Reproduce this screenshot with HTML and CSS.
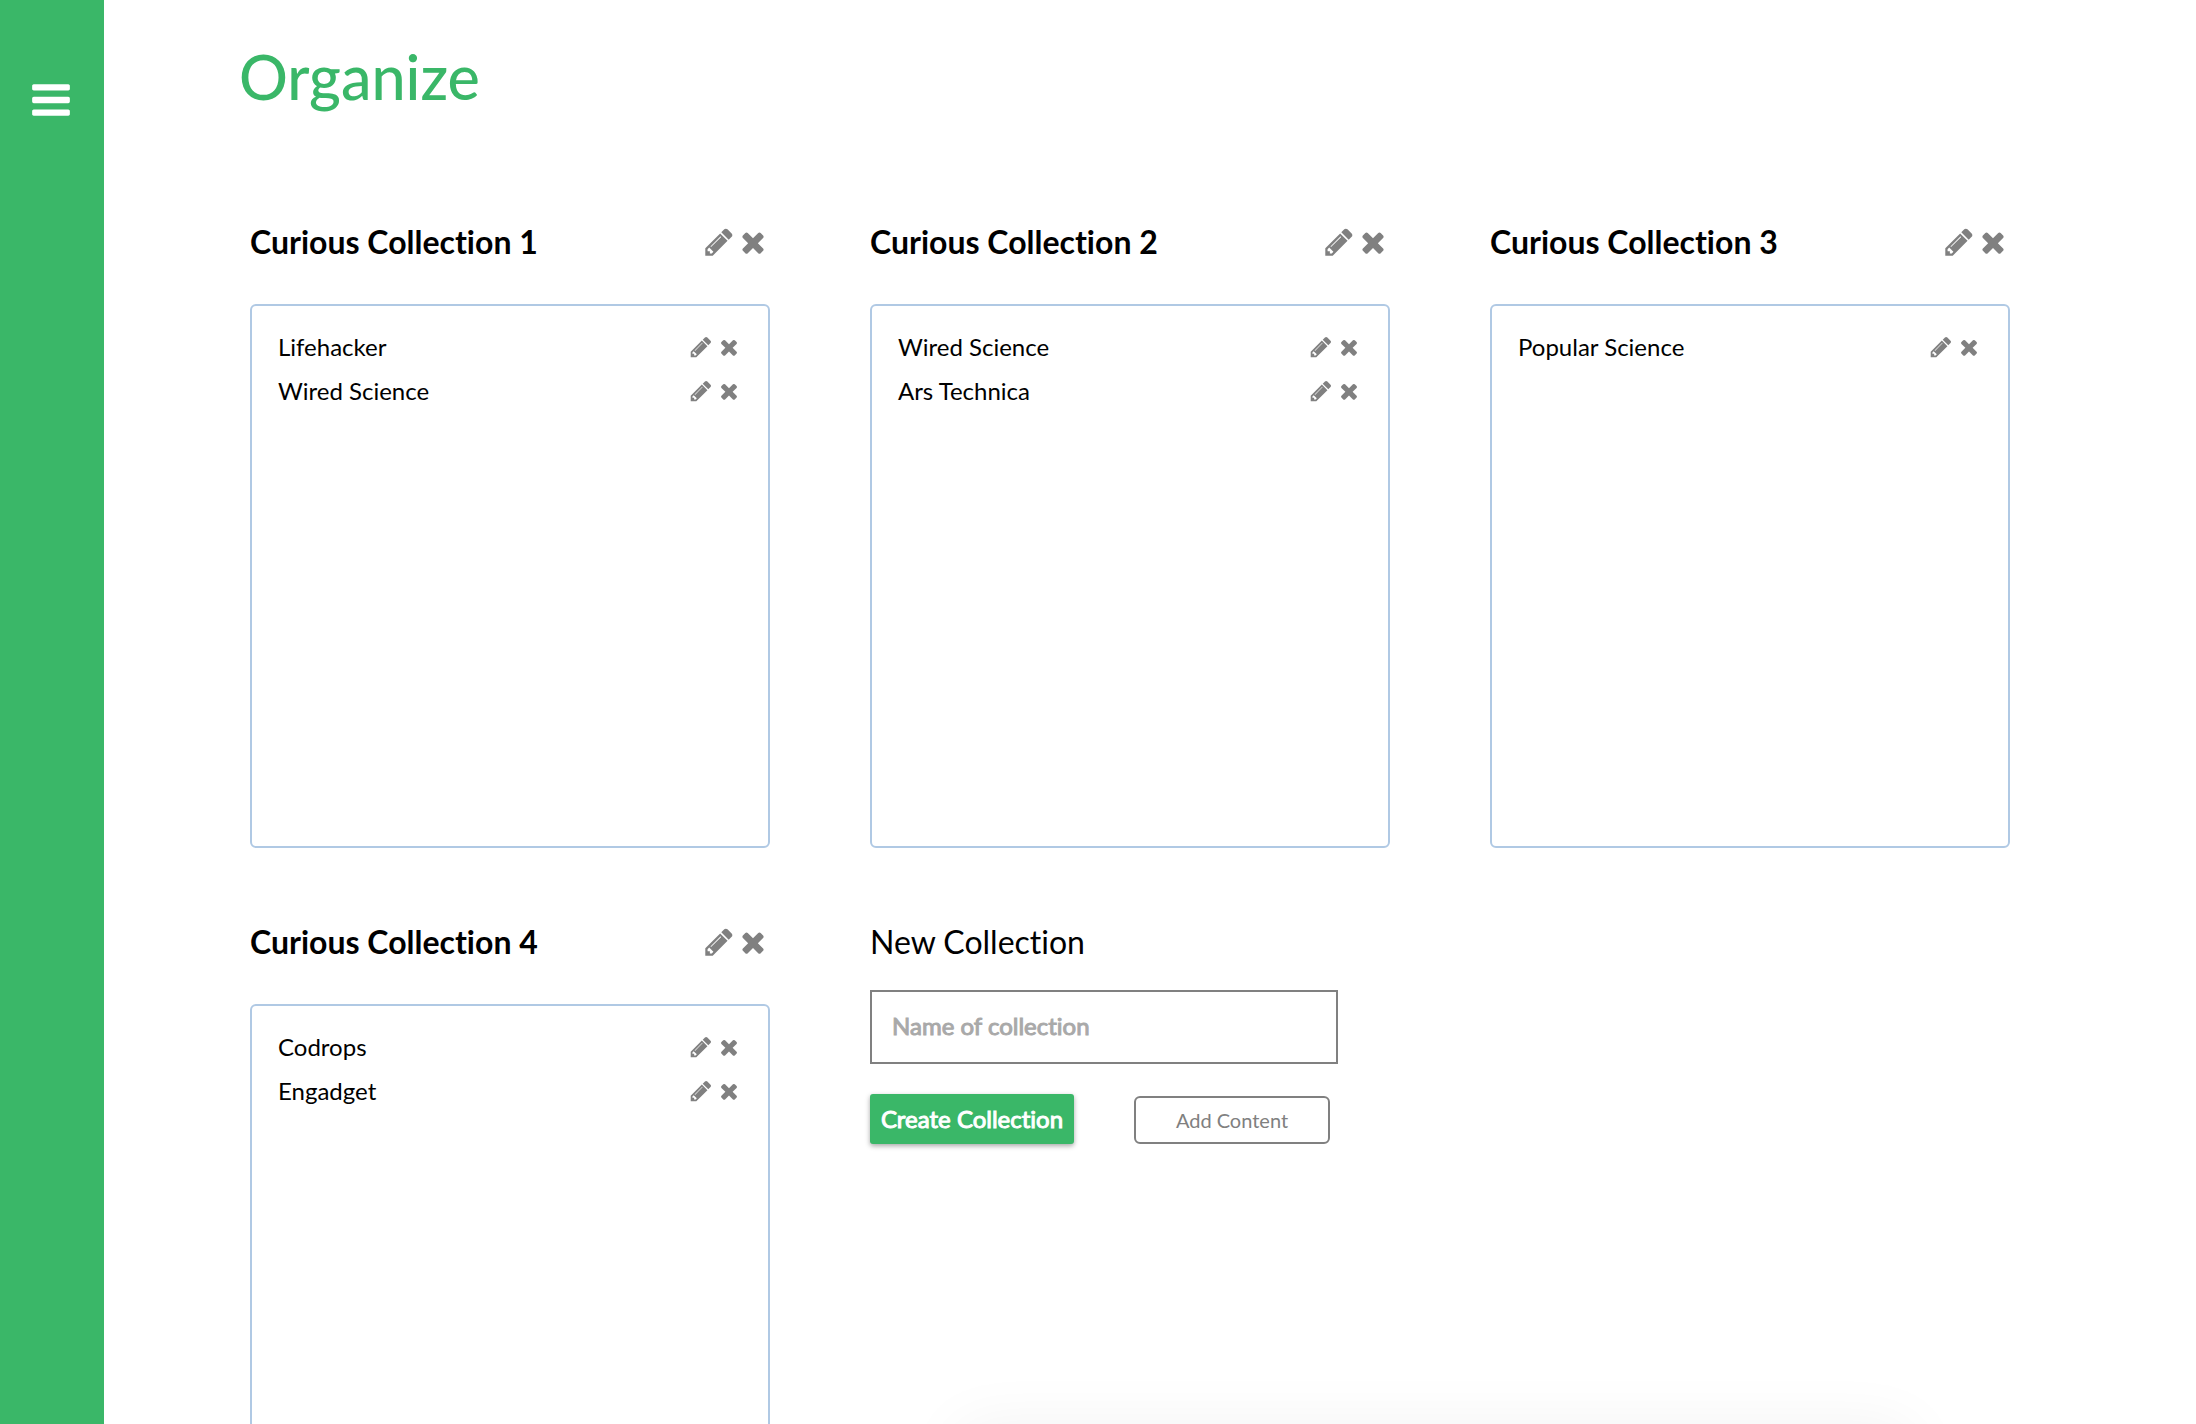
FILE: index.html
```html
<!DOCTYPE html>
<html lang="en">
<head>
<meta charset="utf-8">
<title>Organize</title>
<meta name="viewport" content="width=device-width, initial-scale=1">
<link rel="stylesheet" href="styles.css">
</head>
<body>
<svg class="sprite" aria-hidden="true">
  <symbol id="bars" viewBox="0 0 1792 1792"><path d="M1664 1344v128q0 26-19 45t-45 19h-1408q-26 0-45-19t-19-45v-128q0-26 19-45t45-19h1408q26 0 45 19t19 45zm0-512v128q0 26-19 45t-45 19h-1408q-26 0-45-19t-19-45v-128q0-26 19-45t45-19h1408q26 0 45 19t19 45zm0-512v128q0 26-19 45t-45 19h-1408q-26 0-45-19t-19-45v-128q0-26 19-45t45-19h1408q26 0 45 19t19 45z"/></symbol>
  <symbol id="pencil" viewBox="0 0 1792 1792"><path d="M491 1536l91-91-235-235-91 91v107h128v128h107zm523-928q0-22-22-22-10 0-17 7l-542 542q-7 7-7 17 0 22 22 22 10 0 17-7l542-542q7-7 7-17zm-54-192l416 416-832 832h-416v-416zm683 96q0 53-37 90l-166 166-416-416 166-165q36-38 90-38 53 0 91 38l235 234q37 39 37 91z"/></symbol>
  <symbol id="times" viewBox="0 0 1792 1792"><path d="M1490 1322q0 40-28 68l-136 136q-28 28-68 28t-68-28l-294-294-294 294q-28 28-68 28t-68-28l-136-136q-28-28-28-68t28-68l294-294-294-294q-28-28-28-68t28-68l136-136q28-28 68-28t68 28l294 294 294-294q28-28 68-28t68 28l136 136q28 28 28 68t-28 68l-294 294 294 294q28 28 28 68z"/></symbol>
</svg>
<div class="app">
  <nav class="sidebar">
    <button class="icon-btn menu-btn" type="button" aria-label="Menu"><svg class="icon"><use href="#bars"/></svg></button>
  </nav>
  <main class="main">
    <h1 class="page-title">Organize</h1>
    <div class="collections">
      <section class="collection">
        <header class="collection-head">
          <h2 class="collection-name">Curious Collection 1</h2>
          <div class="head-actions">
            <button class="icon-btn" type="button" aria-label="Edit"><svg class="icon"><use href="#pencil"/></svg></button>
            <button class="icon-btn" type="button" aria-label="Remove"><svg class="icon"><use href="#times"/></svg></button>
          </div>
        </header>
        <ul class="feeds">
          <li class="feed"><span>Lifehacker</span>
            <div class="feed-actions">
              <button class="icon-btn" type="button" aria-label="Edit"><svg class="icon"><use href="#pencil"/></svg></button>
              <button class="icon-btn" type="button" aria-label="Remove"><svg class="icon"><use href="#times"/></svg></button>
            </div>
          </li>
          <li class="feed"><span>Wired Science</span>
            <div class="feed-actions">
              <button class="icon-btn" type="button" aria-label="Edit"><svg class="icon"><use href="#pencil"/></svg></button>
              <button class="icon-btn" type="button" aria-label="Remove"><svg class="icon"><use href="#times"/></svg></button>
            </div>
          </li>
        </ul>
      </section>
      <section class="collection">
        <header class="collection-head">
          <h2 class="collection-name">Curious Collection 2</h2>
          <div class="head-actions">
            <button class="icon-btn" type="button" aria-label="Edit"><svg class="icon"><use href="#pencil"/></svg></button>
            <button class="icon-btn" type="button" aria-label="Remove"><svg class="icon"><use href="#times"/></svg></button>
          </div>
        </header>
        <ul class="feeds">
          <li class="feed"><span>Wired Science</span>
            <div class="feed-actions">
              <button class="icon-btn" type="button" aria-label="Edit"><svg class="icon"><use href="#pencil"/></svg></button>
              <button class="icon-btn" type="button" aria-label="Remove"><svg class="icon"><use href="#times"/></svg></button>
            </div>
          </li>
          <li class="feed"><span>Ars Technica</span>
            <div class="feed-actions">
              <button class="icon-btn" type="button" aria-label="Edit"><svg class="icon"><use href="#pencil"/></svg></button>
              <button class="icon-btn" type="button" aria-label="Remove"><svg class="icon"><use href="#times"/></svg></button>
            </div>
          </li>
        </ul>
      </section>
      <section class="collection">
        <header class="collection-head">
          <h2 class="collection-name">Curious Collection 3</h2>
          <div class="head-actions">
            <button class="icon-btn" type="button" aria-label="Edit"><svg class="icon"><use href="#pencil"/></svg></button>
            <button class="icon-btn" type="button" aria-label="Remove"><svg class="icon"><use href="#times"/></svg></button>
          </div>
        </header>
        <ul class="feeds">
          <li class="feed"><span>Popular Science</span>
            <div class="feed-actions">
              <button class="icon-btn" type="button" aria-label="Edit"><svg class="icon"><use href="#pencil"/></svg></button>
              <button class="icon-btn" type="button" aria-label="Remove"><svg class="icon"><use href="#times"/></svg></button>
            </div>
          </li>
        </ul>
      </section>
      <section class="collection">
        <header class="collection-head">
          <h2 class="collection-name">Curious Collection 4</h2>
          <div class="head-actions">
            <button class="icon-btn" type="button" aria-label="Edit"><svg class="icon"><use href="#pencil"/></svg></button>
            <button class="icon-btn" type="button" aria-label="Remove"><svg class="icon"><use href="#times"/></svg></button>
          </div>
        </header>
        <ul class="feeds">
          <li class="feed"><span>Codrops</span>
            <div class="feed-actions">
              <button class="icon-btn" type="button" aria-label="Edit"><svg class="icon"><use href="#pencil"/></svg></button>
              <button class="icon-btn" type="button" aria-label="Remove"><svg class="icon"><use href="#times"/></svg></button>
            </div>
          </li>
          <li class="feed"><span>Engadget</span>
            <div class="feed-actions">
              <button class="icon-btn" type="button" aria-label="Edit"><svg class="icon"><use href="#pencil"/></svg></button>
              <button class="icon-btn" type="button" aria-label="Remove"><svg class="icon"><use href="#times"/></svg></button>
            </div>
          </li>
        </ul>
      </section>
      <form class="new-collection">
        <label class="new-label" for="collection-name">New Collection</label>
        <input class="name-input" id="collection-name" type="text" placeholder="Name of collection">
        <div class="form-actions">
          <button class="create-btn" type="submit">Create Collection</button>
          <button class="add-btn" type="button">Add Content</button>
        </div>
      </form>
    </div>
  </main>
</div>
<div class="sheet"></div>
</body>
</html>
```
FILE: styles.css
```css
*, *::before, *::after { box-sizing: border-box; }

body {
  margin: 0;
  background: #fff;
  color: #000;
  font-family: Lato, "Liberation Sans", sans-serif;
  font-size: 24px;
  font-variant-ligatures: none;
}

button, input { font-family: inherit; font-variant-ligatures: inherit; }

.sprite { display: none; }

/* The shell fills the window; the main column scrolls inside it */
.app { display: flex; height: 100vh; }

.sidebar {
  flex: none;
  width: 104px;
  padding: 78px 0 0 29px;
  background: #3ab768;
}

.icon-btn {
  display: block;
  padding: 0;
  border: 0;
  background: none;
  color: #808080;
  cursor: pointer;
}

.icon {
  display: block;
  width: 1em;
  height: 1em;
  fill: currentColor;
}

.menu-btn { color: #fff; font-size: 44px; }

.main {
  flex: 1;
  min-width: 0;
  padding: 41px 186px 60px 146px;
  overflow-y: auto;
  scrollbar-width: none;
}

.page-title {
  margin: 0 0 109px -11px;
  color: #3ab768;
  font-size: 61px;
  font-weight: 500;
  line-height: 72px;
}

.collections {
  display: grid;
  grid-template-columns: repeat(3, 1fr);
  gap: 74px 100px;
}

.collection-head {
  display: flex;
  align-items: center;
  justify-content: space-between;
  margin-bottom: 42px;
}

.collection-name {
  margin: 0;
  font-size: 32px;
  font-weight: 700;
  line-height: 40px;
}

.head-actions { display: flex; gap: 2px; padding-right: 1px; }
.head-actions .icon-btn { font-size: 32px; }

.feeds {
  min-height: 544px;
  margin: 0;
  padding: 19px 27px 19px 26px;
  border: 2px solid #b0c9e4;
  border-radius: 6px;
  list-style: none;
}

.feed {
  display: flex;
  align-items: center;
  justify-content: space-between;
  line-height: 44px;
}

.feed-actions { display: flex; gap: 4px; }
.feed-actions .icon-btn { font-size: 24px; }

.new-label {
  display: block;
  margin-bottom: 28px;
  font-size: 32px;
  line-height: 40px;
}

.name-input {
  display: block;
  width: 90%;
  height: 74px;
  padding: 0 20px 3px;
  border: 2px solid #808080;
  background: #fff;
  color: #000;
  font-size: 24px;
  -webkit-text-stroke: 1px;
}

.name-input::placeholder { color: #a9a9a9; opacity: 1; }

.form-actions {
  display: flex;
  align-items: flex-end;
  gap: 60px;
  margin-top: 30px;
}

.create-btn {
  min-width: 204px;
  height: 50px;
  padding: 0 8px 2px;
  border: 0;
  border-radius: 3px;
  background: #3ab768;
  box-shadow: 0 2px 5px rgba(0, 0, 0, .35);
  color: #fff;
  font-size: 24px;
  -webkit-text-stroke: 1px;
}

.add-btn {
  min-width: 196px;
  height: 48px;
  padding: 0 36px;
  border: 2px solid #808080;
  border-radius: 6px;
  background: #fff;
  color: #808080;
  font-size: 20px;
}

.sheet {
  position: fixed;
  top: calc(100% + 4px);
  left: 960px;
  right: 286px;
  height: 200px;
  box-shadow: 0 0 60px rgba(0, 0, 0, .06);
  pointer-events: none;
}
```
